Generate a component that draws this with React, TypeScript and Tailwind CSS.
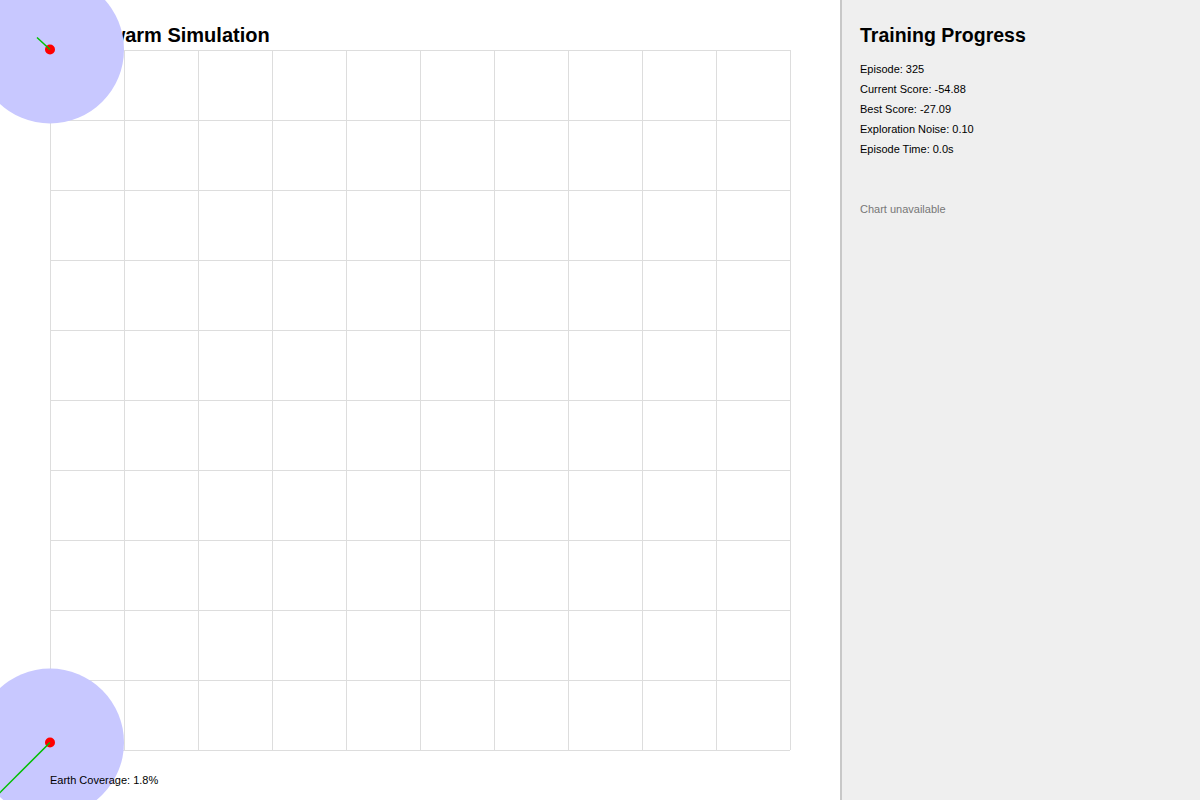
const COLS = 10;
const ROWS = 10;
const CELL_W = 74;
const CELL_H = 70;
const M = 50;

function SimCanvas() {
  const xs = Array.from({ length: COLS + 1 }, (_, i) => M + i * CELL_W);
  const ys = Array.from({ length: ROWS + 1 }, (_, i) => M + i * CELL_H);
  const drones = [
    { x: 50, y: 49.5, hx: 37, hy: 37.5 },
    { x: 50, y: 742.5, hx: -10, hy: 802.5 },
  ];

  return (
    <svg width="840" height="800" viewBox="0 0 840 800" className="block">
      {/* grid */}
      {xs.map((x) => (
        <line key={`v${x}`} x1={x + 0.5} y1={M} x2={x + 0.5} y2={M + ROWS * CELL_H} stroke="#dddddd" strokeWidth="1" />
      ))}
      {ys.map((y) => (
        <line key={`h${y}`} x1={M} y1={y + 0.5} x2={M + COLS * CELL_W} y2={y + 0.5} stroke="#dddddd" strokeWidth="1" />
      ))}

      <text x="50" y="42" fontFamily="'Liberation Sans', Arial, sans-serif" fontWeight="700" fontSize="20" fill="#000">
        UAV Swarm Simulation
      </text>

      {/* coverage */}
      {drones.map((d, i) => (
        <circle key={`c${i}`} cx={d.x} cy={d.y} r="74" fill="#c8c8ff" />
      ))}
      {drones.map((d, i) => (
        <circle key={`d${i}`} cx={d.x} cy={d.y} r="5" fill="#ff0000" />
      ))}
      {drones.map((d, i) => (
        <line key={`l${i}`} x1={d.x} y1={d.y} x2={d.hx} y2={d.hy} stroke="#00c000" strokeWidth="1.5" />
      ))}

      <text x="50" y="784" fontFamily="'Liberation Sans', Arial, sans-serif" fontSize="11" fill="#000">
        Earth Coverage: 1.8%
      </text>
    </svg>
  );
}

export default function App() {
  const stats = [
    "Episode: 325",
    "Current Score: -54.88",
    "Best Score: -27.09",
    "Exploration Noise: 0.10",
    "Episode Time: 0.0s",
  ];

  return (
    <div className="flex h-[800px] w-[1200px] overflow-hidden bg-white">
      <div className="h-[800px] w-[840px] shrink-0 bg-white">
        <SimCanvas />
      </div>

      <aside className="flex-1 border-l-2 border-[#c8c8c8] bg-[#efefef] pl-[18px] pt-[21px] font-['Liberation_Sans',Arial,sans-serif] text-black">
        <h2 className="text-[19.5px] font-bold leading-[28px]">Training Progress</h2>
        <div className="mt-[10px]">
          {stats.map((s) => (
            <p key={s} className="text-[11px] leading-[20px]">
              {s}
            </p>
          ))}
        </div>
        <p className="mt-[40px] text-[11px] leading-[20px] text-[#777777]">Chart unavailable</p>
      </aside>
    </div>
  );
}
